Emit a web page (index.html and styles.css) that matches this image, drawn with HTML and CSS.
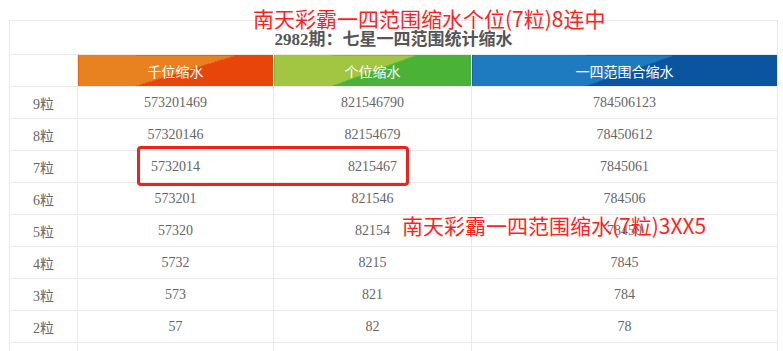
FILE: index.html
```html
<!DOCTYPE html>
<html lang="zh-CN">
<head>
<meta charset="utf-8">
<title>2982期：七星一四范围统计缩水</title>
<link rel="stylesheet" href="styles.css">
</head>
<body>
<div class="page">
  <table class="stats">
    <colgroup>
      <col class="c-label">
      <col class="c-qian">
      <col class="c-ge">
      <col class="c-he">
    </colgroup>
    <thead>
      <tr class="title-row"><th colspan="4" class="title">2982期：七星一四范围统计缩水</th></tr>
      <tr class="head-row">
        <th class="blank"></th>
        <th class="h-orange">千位缩水</th>
        <th class="h-green">个位缩水</th>
        <th class="h-blue">一四范围合缩水</th>
      </tr>
    </thead>
    <tbody>
      <tr><td>9粒</td><td>573201469</td><td>821546790</td><td>784506123</td></tr>
      <tr><td>8粒</td><td>57320146</td><td>82154679</td><td>78450612</td></tr>
      <tr><td>7粒</td><td>5732014</td><td>8215467</td><td>7845061</td></tr>
      <tr><td>6粒</td><td>573201</td><td>821546</td><td>784506</td></tr>
      <tr><td>5粒</td><td>57320</td><td>82154</td><td>78450</td></tr>
      <tr><td>4粒</td><td>5732</td><td>8215</td><td>7845</td></tr>
      <tr><td>3粒</td><td>573</td><td>821</td><td>784</td></tr>
      <tr><td>2粒</td><td>57</td><td>82</td><td>78</td></tr>
      <tr><td></td><td></td><td></td><td></td></tr>
    </tbody>
  </table>
  <div class="note note-top">南天彩霸一四范围缩水个位(7粒)8连中</div>
  <div class="highlight"></div>
  <div class="note note-mid">南天彩霸一四范围缩水(7粒)3XX5</div>
</div>
</body>
</html>
```

FILE: styles.css
```css
html, body {
  margin: 0;
  padding: 0;
  background: #fff;
}

.page {
  position: relative;
  padding: 20px 0 0 9px;
  width: 783px;
  height: 351px;
  box-sizing: border-box;
  overflow: hidden;
}

.stats {
  border-collapse: collapse;
  table-layout: fixed;
  width: 768px;
  font-family: "Liberation Serif", "Noto Sans CJK SC", serif;
  font-size: 14px;
  color: #666;
}

.c-label { width: 68px; }
.c-qian { width: 196px; }
.c-ge { width: 198px; }
.c-he { width: 306px; }

.stats th,
.stats td {
  border: 1px solid #e9e9e9;
  padding: 0;
  text-align: center;
  vertical-align: middle;
}

.title-row { height: 34px; }

.title {
  font-weight: bold;
  font-size: 17px;
  color: #555;
  padding-top: 4px !important;
  line-height: 1;
}

.head-row { height: 32px; }

.head-row th {
  color: #fff;
  font-family: "Noto Sans CJK SC", "Liberation Sans", sans-serif;
  font-weight: normal;
  font-size: 14px;
}

.head-row .blank {
  background: #fff;
}

.h-orange {
  background: linear-gradient(163deg, #e8811f 53%, #e8450b 53%);
  border-right-color: #fff !important;
}

.h-green {
  background: linear-gradient(160deg, #a2c641 50%, #4ab237 50%);
  border-left-color: #fff !important;
  border-right-color: #fff !important;
}

.h-blue {
  background: linear-gradient(161deg, #1f7bc0 51%, #0b55a0 51%);
  border-left-color: #fff !important;
}

.stats tbody tr { height: 32px; }

.note {
  position: absolute;
  font-family: "Noto Sans CJK SC", "Liberation Sans", sans-serif;
  font-size: 21px;
  line-height: 1;
  color: #ff1f1f;
  white-space: nowrap;
}

.note-top {
  left: 253px;
  top: 8px;
}

.note-mid {
  left: 402px;
  top: 215px;
}

.highlight {
  position: absolute;
  left: 137px;
  top: 146px;
  width: 272px;
  height: 40px;
  box-sizing: border-box;
  border: 3px solid #f0201c;
  border-radius: 4px;
}
```
